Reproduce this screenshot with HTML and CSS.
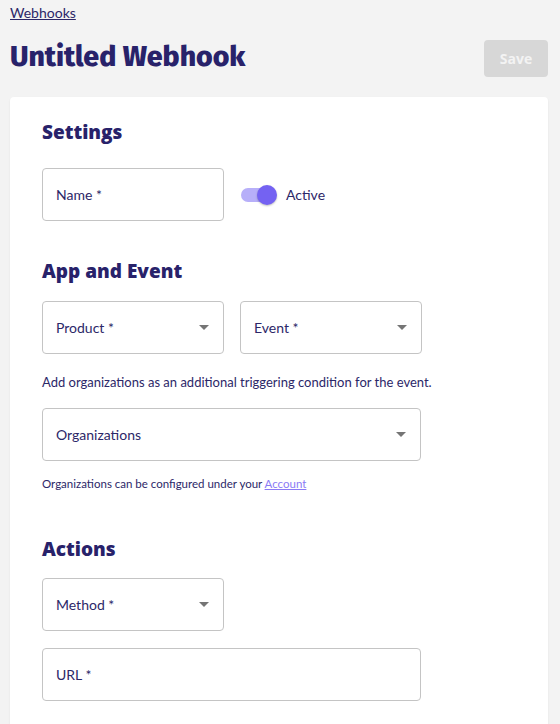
FILE: index.html
```html
<!DOCTYPE html>
<html>
<head>
<meta charset="utf-8">
<link rel="stylesheet" href="styles.css">
</head>
<body>
<div class="page">
  <a class="crumb" href="#">Webhooks</a>
  <div class="header">
    <h1 class="title">Untitled Webhook</h1>
    <button class="save">Save</button>
  </div>
  <div class="card">
    <h2 class="section-title">Settings</h2>
    <div class="row">
      <div class="field w-sm"><span class="label">Name *</span></div>
      <div class="toggle">
        <span class="track"><span class="thumb"></span></span>
        <span class="toggle-label">Active</span>
      </div>
    </div>

    <h2 class="section-title s2">App and Event</h2>
    <div class="row gap">
      <div class="field w-sm select"><span class="label">Product *</span><span class="caret"></span></div>
      <div class="field w-sm select"><span class="label">Event *</span><span class="caret"></span></div>
    </div>
    <p class="help">Add organizations as an additional triggering condition for the event.</p>
    <div class="field w-lg select"><span class="label">Organizations</span><span class="caret"></span></div>
    <p class="note">Organizations can be configured under your <a href="#">Account</a></p>

    <h2 class="section-title s3">Actions</h2>
    <div class="field w-sm select"><span class="label">Method *</span><span class="caret"></span></div>
    <div class="field w-lg url"><span class="label">URL *</span></div>
  </div>
</div>
</body>
</html>
```
FILE: styles.css
```css
* { box-sizing: border-box; }
html, body { margin: 0; padding: 0; }
body {
  background: #f3f3f3;
  font-family: Lato, "Open Sans", sans-serif;
  color: #2c2768;
  width: 560px;
  height: 724px;
  overflow: hidden;
}
.page { padding: 2px 12px 0 10px; }
.crumb {
  display: inline-block;
  font-size: 14px;
  color: #2c2768;
  text-decoration: underline;
  line-height: 18px;
}
.header {
  display: flex;
  justify-content: space-between;
  align-items: flex-start;
  margin-top: 18px;
}
.title {
  margin: 0;
  font-family: "Fira Sans", "Open Sans", Lato, sans-serif;
  font-size: 28.5px;
  font-weight: 800;
  color: #28226a;
  line-height: 34px;
}
.save {
  width: 64px;
  height: 37px;
  border: none;
  border-radius: 4px;
  background: #d7d7d7;
  color: #f3f3f3;
  font-family: "Open Sans", sans-serif;
  font-weight: 700;
  font-size: 14px;
  margin-top: 0;
}
.card {
  margin-top: 20px;
  background: #fff;
  border-radius: 4px;
  box-shadow: 0 1px 2px rgba(0,0,0,0.08);
  padding: 22px 32px 30px 32px;
  height: 640px;
}
.section-title {
  margin: 0;
  font-family: "Open Sans", Lato, sans-serif;
  font-size: 19px;
  font-weight: 800;
  color: #28226a;
  line-height: 26px;
}
.s2 { margin-top: 37px; }
.s3 { margin-top: 44px; }
.row { display: flex; align-items: center; margin-top: 23px; }
.row.gap { gap: 16px; margin-top: 17px; }
.field {
  height: 53px;
  border: 1px solid #c4c4c4;
  border-radius: 4px;
  display: flex;
  align-items: center;
  justify-content: space-between;
  padding: 0 14px 0 13px;
  flex-shrink: 0;
}
.w-sm { width: 182px; }
.w-lg { width: 379px; }
.label { font-size: 14px; color: #2c2768; }
.caret {
  width: 0; height: 0;
  border-left: 5px solid transparent;
  border-right: 5px solid transparent;
  border-top: 5px solid #757575;
  margin-right: 0;
}
.toggle { display: flex; align-items: center; margin-left: 17px; }
.track {
  position: relative;
  width: 34px;
  height: 14px;
  border-radius: 7px;
  background: #b7aff9;
}
.thumb {
  position: absolute;
  right: -2px;
  top: -3px;
  width: 20px;
  height: 20px;
  border-radius: 50%;
  background: #7462f2;
  box-shadow: 0 1px 2px rgba(0,0,0,0.25);
}
.toggle-label { margin-left: 11px; font-size: 14px; color: #2c2768; }
.help { margin: 19px 0 17px; font-size: 13px; line-height: 18px; color: #2c2768; }
.note { margin: 15px 0 0; font-size: 11.5px; line-height: 16px; color: #2c2768; }
.note a { color: #8a7af5; text-decoration: underline; }
.s3 + .field { margin-top: 16px; }
.url { margin-top: 17px; }
```
